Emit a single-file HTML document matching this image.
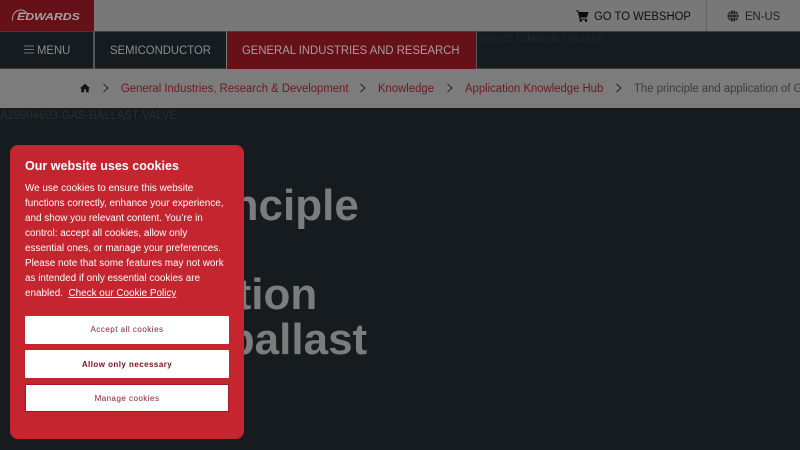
<!DOCTYPE html>
<html lang="en"><head><meta charset="utf-8"><title>The principle and application of a gas ballast valve</title>
<style>
html,body{margin:0;padding:0}
body{width:800px;height:450px;overflow:hidden;position:relative;background:#151b1e;font-family:"Liberation Sans",sans-serif}
.a{position:absolute;white-space:nowrap}
.t{line-height:14px;font-size:11.500px;transform-origin:0 50%;transform:scaleX(.983)}
.h{font-size:44px;font-weight:bold;color:#7c7c7c;line-height:44px}
</style></head><body>
<!-- top bar -->
<div class="a" style="left:0;top:0;width:800px;height:31px;background:#787878"></div>
<div class="a" style="left:0;top:0;width:94px;height:31px;background:#661018"></div>
<svg class="a" style="left:11px;top:8px" width="18" height="15" viewBox="0 0 18 15"><path d="M1.500 12.500C1 6 5 2 10 2C12 2 14 3 15 4.500" fill="none" stroke="#a8a0a0" stroke-width="1"/><path d="M8 5H17" fill="none" stroke="#a8a0a0" stroke-width="1"/></svg>
<div class="a" style="left:17px;top:13px;font-size:10px;line-height:10px;font-weight:bold;font-style:italic;color:#a8a0a0;transform-origin:0 50%;transform:scaleX(1.23)">EDWARDS</div>
<svg class="a" style="left:576px;top:10px" width="13" height="12" viewBox="0 0 13 12"><path d="M0 .5H2.500L3 2H12.500L11 7.500H4.300L4.600 8.800H11V9.800H3.600L1.800 1.500H0Z" fill="#0b0b0b"/><circle cx="4.800" cy="10.800" r="1.200" fill="#0b0b0b"/><circle cx="10" cy="10.800" r="1.200" fill="#0b0b0b"/></svg>
<div class="a t" style="left:594px;top:10px;color:#0f0f0f">GO TO WEBSHOP</div>
<div class="a" style="left:706px;top:0;width:1px;height:31px;background:#636363"></div>
<svg class="a" style="left:727px;top:10px" width="12" height="12" viewBox="0 0 12 12"><circle cx="6" cy="6" r="5.500" fill="#1c1c1c"/><path d="M0 4.200H12M0 7.800H12M6 0V12M3.800 .6C2.600 4 2.600 8 3.800 11.400M8.200 .6C9.400 4 9.400 8 8.200 11.400" stroke="#787878" stroke-width=".7" fill="none"/></svg>
<div class="a t" style="left:745px;top:10px;color:#222">EN-US</div>
<!-- nav -->
<div class="a" style="left:0;top:31px;width:800px;height:38px;background:#151b1e"></div>
<div class="a" style="left:0;top:31px;width:800px;height:1px;background:#3a3e41"></div>
<div class="a" style="left:0;top:68px;width:800px;height:1px;background:#3a3e41"></div>
<div class="a" style="left:93px;top:31px;width:2px;height:38px;background:#55585a"></div>
<div class="a" style="left:226px;top:31px;width:1px;height:38px;background:#777"></div>
<div class="a" style="left:227px;top:32px;width:249px;height:37px;background:#661018"></div>
<div class="a" style="left:476px;top:31px;width:1px;height:38px;background:#55585a"></div>
<svg class="a" style="left:24px;top:45px" width="10" height="10" viewBox="0 0 10 10"><path d="M0 1H10M0 4.500H10M0 8H10" stroke="#6f7274" stroke-width="1"/></svg>
<div class="a t" style="left:37px;top:44px;color:#8b8d8f">MENU</div>
<div class="a t" style="left:110px;top:44px;color:#8b8d8f">SEMICONDUCTOR</div>
<div class="a t" style="left:242px;top:44px;color:#a89ea0">GENERAL INDUSTRIES AND RESEARCH</div>
<div class="a t" style="left:477px;top:32px;color:#20272b">Search Edwards Vacuum</div>
<!-- breadcrumb -->
<div class="a" style="left:0;top:69px;width:800px;height:39px;background:#7c7c7c"></div>
<svg class="a" style="left:80px;top:83px" width="10" height="10" viewBox="0 0 10 10"><path d="M5 .8L10 5.300H8.700V9.300H6V6.300H4V9.300H1.300V5.300H0Z" fill="#101417"/></svg>
<svg class="a" style="left:102px;top:83px" width="8" height="10" viewBox="0 0 8 10"><path d="M1.500 1L6 5L1.500 9" fill="none" stroke="#25292c" stroke-width="1.100"/></svg>
<div class="a t" style="left:121px;top:82px;color:#6e1820">General Industries, Research &amp; Development</div>
<svg class="a" style="left:359px;top:83px" width="8" height="10" viewBox="0 0 8 10"><path d="M1.500 1L6 5L1.500 9" fill="none" stroke="#25292c" stroke-width="1.100"/></svg>
<div class="a t" style="left:378px;top:82px;color:#6e1820">Knowledge</div>
<svg class="a" style="left:446px;top:83px" width="8" height="10" viewBox="0 0 8 10"><path d="M1.500 1L6 5L1.500 9" fill="none" stroke="#25292c" stroke-width="1.100"/></svg>
<div class="a t" style="left:465px;top:82px;color:#6e1820">Application Knowledge Hub</div>
<svg class="a" style="left:615px;top:83px" width="8" height="10" viewBox="0 0 8 10"><path d="M1.500 1L6 5L1.500 9" fill="none" stroke="#25292c" stroke-width="1.100"/></svg>
<div class="a t" style="left:634px;top:82px;color:#3c3c3c;width:169px;overflow:hidden">The principle and application of Gas Ballast Valve</div>
<div class="a t" style="left:0;top:109px;color:#2a2f32">A25904603-GAS-BALLAST-VALVE</div>
<!-- heading -->
<div class="a h" style="left:85px;top:184px">The principle</div>
<div class="a h" style="left:85px;top:229px">and</div>
<div class="a h" style="left:85px;top:273px">application</div>
<div class="a h" style="left:86px;top:318px">of gas ballast</div>
<!-- cookie -->
<div class="a" style="left:10px;top:145px;width:234px;height:294px;background:#c4252e;border-radius:8px;white-space:normal">
<div class="a" style="left:15px;top:14px;font-size:13px;font-weight:bold;color:#fff;line-height:14px;transform-origin:0 50%;transform:scaleX(.964)">Our website uses cookies</div>
<div class="a" style="left:15px;top:36px;font-size:10px;line-height:15px;color:#fff;transform-origin:0 0;transform:scaleX(.99)">We use cookies to ensure this website<br>functions correctly, enhance your experience,<br>and show you relevant content. You’re in<br>control: accept all cookies, allow only<br>essential ones, or manage your preferences.<br>Please note that some features may not work<br>as intended if only essential cookies are<br>enabled.&nbsp; <span style="text-decoration:underline">Check our Cookie Policy</span></div>
<div class="a" style="left:15px;top:171px;width:204px;height:28px;background:#fff;border-radius:1px;text-align:center;font-size:8px;letter-spacing:.5px;line-height:27px;color:#8b1f2a">Accept all cookies</div>
<div class="a" style="left:15px;top:205px;width:204px;height:28px;background:#fff;border-radius:1px;text-align:center;font-size:8px;font-weight:bold;letter-spacing:.45px;line-height:29px;color:#7c0f1a">Allow only necessary</div>
<div class="a" style="left:15px;top:239px;width:204px;height:28px;box-sizing:border-box;background:#fff;border:1px solid #a31822;border-radius:1px;text-align:center;font-size:8px;letter-spacing:.47px;line-height:28px;color:#8b1f2a">Manage cookies</div>
</div>
</body></html>
